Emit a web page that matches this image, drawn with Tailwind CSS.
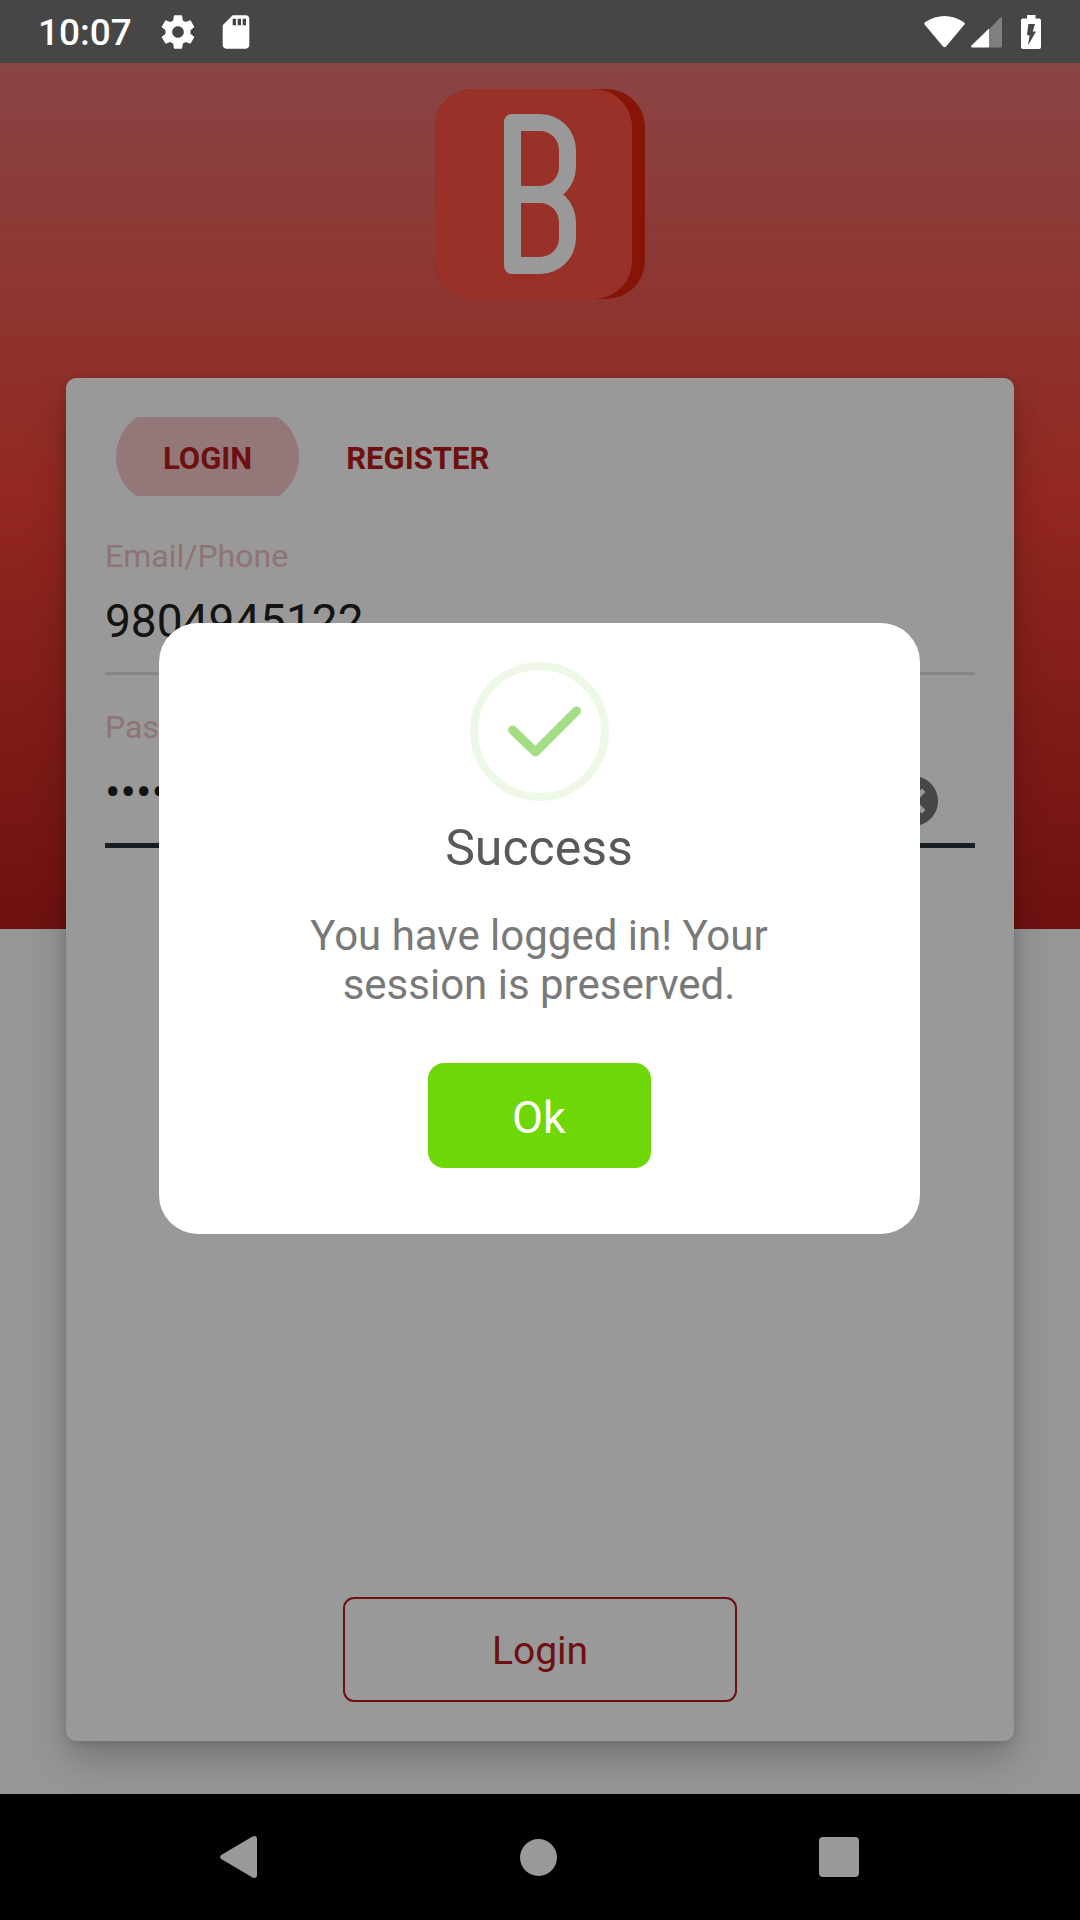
<!DOCTYPE html>
<html lang="en">
<head>
<meta charset="utf-8">
<meta name="viewport" content="width=device-width, initial-scale=1">
<title>Login</title>
<script src="https://cdn.jsdelivr.net/npm/@tailwindcss/browser@4"></script>
</head>
<body class="flex min-h-screen flex-col bg-[#fafafa] font-['Roboto',sans-serif]">

  <!-- Status bar -->
  <header class="flex h-[63px] items-center justify-between bg-[#464646] pr-7 pl-[38px] text-white">
    <div class="flex items-center">
      <span class="pt-0.5 text-[37px] leading-[44px] font-medium">10:07</span>
      <svg class="ml-[26px] size-10" viewBox="0 0 24 24" fill="currentColor" aria-hidden="true"><path d="M19.43 12.98c.04-.32.07-.64.07-.98s-.03-.66-.07-.98l2.11-1.65c.19-.15.24-.42.12-.64l-2-3.46c-.12-.22-.39-.3-.61-.22l-2.49 1c-.52-.4-1.08-.73-1.69-.98l-.38-2.65C14.46 2.18 14.25 2 14 2h-4c-.25 0-.46.18-.49.42l-.38 2.65c-.61.25-1.17.59-1.69.98l-2.49-1c-.23-.09-.49 0-.61.22l-2 3.46c-.13.22-.07.49.12.64l2.11 1.65c-.04.32-.07.65-.07.98s.03.66.07.98l-2.11 1.65c-.19.15-.24.42-.12.64l2 3.46c.12.22.39.3.61.22l2.49-1c.52.4 1.08.73 1.69.98l.38 2.65c.03.24.24.42.49.42h4c.25 0 .46-.18.49-.42l.38-2.65c.61-.25 1.17-.59 1.69-.98l2.49 1c.23.09.49 0 .61-.22l2-3.46c.12-.22.07-.49-.12-.64l-2.11-1.65zM12 15.5c-1.93 0-3.5-1.57-3.5-3.5s1.57-3.5 3.5-3.5 3.5 1.57 3.5 3.5-1.57 3.5-3.5 3.5z"/></svg>
      <svg class="ml-[18px] size-10" viewBox="0 0 24 24" fill="currentColor" aria-hidden="true"><path d="M18 2h-8L4.020 8 4 20c0 1.100.9 2 2 2h12c1.100 0 2-.9 2-2V4c0-1.100-.9-2-2-2zm-6 6h-2V4h2v4zm3 0h-2V4h2v4zm3 0h-2V4h2v4z"/></svg>
    </div>
    <div class="flex items-center">
      <svg class="h-8 w-[41px]" viewBox="0 0 41 32" fill="currentColor" aria-hidden="true"><path d="M1 9Q-.5 7.500 1 6.200Q20.500-6.200 40 6.200Q41.500 7.500 40 9L22 30.500Q20.500 32 19 30.500Z"/></svg>
      <svg class="ml-[6px] size-8" viewBox="0 0 32 32" aria-hidden="true"><path d="M18 13.500L29.300 1.500Q31 .5 31 2.500V29.500Q31 31.500 29 31.500H18Z" fill="#7f7f7f"/><path d="M18 12.500V31.500H1.500Q-.5 31 .5 29.500Z" fill="#fff"/></svg>
      <svg class="mr-[11px] ml-[18px] h-[34px] w-5" viewBox="0 0 20 34" aria-hidden="true"><path d="M6 0h8.500v3.500H18Q20 3.500 20 5.500V32Q20 34 18 34H2Q0 34 0 32V5.500Q0 3.500 2 3.500H6Z" fill="#fff"/><path d="M7.300 9H14L11.700 16.500H15L7 30.500L8.600 20.300H6Z" fill="#464646"/></svg>
    </div>
  </header>

  <main class="relative flex flex-1 flex-col">
    <div class="absolute inset-x-0 top-0 h-1/2 bg-linear-to-b/srgb from-[#e57373] via-[#f44336] to-[#b71c1c]"></div>

    <div class="relative flex flex-1 flex-col items-center px-[66px] pt-[26px] pb-[53px]">
      <!-- App logo: tile with a darker edge, mark built from two rounded frames -->
      <div class="size-[210px] rounded-[38px] bg-[#e0230d] pr-[13px]" role="img" aria-label="App logo">
        <div class="flex h-full flex-col items-start rounded-[38px] bg-[#ff5343] pt-[25px] pl-[69px]">
          <div class="h-[89px] w-[72px] rounded-l-lg rounded-r-[36px] rounded-bl-none border-[17px] border-white"></div>
          <div class="-mt-[17px] h-[88px] w-[72px] rounded-l-lg rounded-r-[36px] rounded-tl-none border-[17px] border-white"></div>
        </div>
      </div>

      <form class="mt-[79px] flex w-full flex-1 flex-col rounded-[10px] bg-white p-[39px] shadow-[0_18px_36px_rgba(0,0,0,0.22),0_2px_10px_rgba(0,0,0,0.12)]">
        <div class="ml-[11px] flex h-[79px] items-center overflow-hidden text-[31px] leading-[36px] font-bold text-[#b71c1c]">
          <button type="button" class="h-24 shrink-0 rounded-full bg-[#f7c7ca] px-[47px] pt-1">LOGIN</button>
          <button type="button" class="h-24 shrink-0 rounded-full px-[47px] pt-1">REGISTER</button>
        </div>

        <label for="email" class="mt-[41px] text-[32px] leading-[38px] text-[#eec1c1]">Email/Phone</label>
        <input id="email" type="text" value="9804945122" class="h-[100px] w-full border-b-[3px] border-[#e0e0e0] pb-[5px] text-[46px] text-[#212121] outline-none">

        <label for="password" class="mt-[33px] text-[32px] leading-[38px] text-[#eec1c1]">Password</label>
        <div class="relative">
          <input id="password" type="password" value="password" class="block h-[102px] w-full border-b-[5px] border-[#263238] pb-[5px] text-[46px] text-[#212121] outline-none">
          <button type="button" aria-label="Clear" class="absolute top-[25px] right-8 text-[#757575]">
            <svg class="size-[60px]" viewBox="0 0 24 24" fill="currentColor" aria-hidden="true"><path d="M12 2C6.470 2 2 6.470 2 12s4.470 10 10 10 10-4.470 10-10S17.530 2 12 2zm5 13.590L15.590 17 12 13.410 8.410 17 7 15.590 10.590 12 7 8.410 8.410 7 12 10.590 15.590 7 17 8.410 13.410 12 17 15.590z"/></svg>
          </button>
        </div>

        <button type="submit" class="mt-auto h-[105px] w-[394px] self-center rounded-[11px] border-2 border-[#b71c1c] pt-1 text-[39px] text-[#b71c1c]">Login</button>
      </form>
    </div>

    <!-- Success dialog -->
    <div class="absolute inset-0 flex items-center justify-center bg-black/40 pr-0.5">
      <div role="dialog" aria-modal="true" aria-labelledby="dialog-title" class="flex w-[761px] max-w-full flex-col items-center rounded-[39px] bg-white pt-[39px] pb-[66px] text-center">
        <svg class="size-[139px]" viewBox="0 0 139 139" fill="none" aria-hidden="true"><circle cx="69.500" cy="69.500" r="65.500" stroke="#edf8e7" stroke-width="8"/><path d="M42.500 68L65.500 90L106.500 49" stroke="#a5dc86" stroke-width="9" stroke-linecap="round" stroke-linejoin="round"/></svg>
        <h1 id="dialog-title" class="mt-[18px] text-[50px] leading-[59px] text-[#595959]">Success</h1>
        <p class="mt-[33px] w-[500px] text-[42px] leading-[49px] text-[#797979]">You have logged in! Your session is preserved.</p>
        <button type="button" class="mt-[54px] h-[105px] w-[223px] rounded-2xl bg-[#6dd708] pt-1 text-[45px] text-white">Ok</button>
      </div>
    </div>
  </main>

  <!-- System navigation -->
  <nav class="flex h-[126px] items-center justify-center bg-black pr-[3px] text-[#999]">
    <button type="button" aria-label="Back" class="flex w-[300px] justify-center">
      <svg class="h-[42px] w-[37px]" viewBox="0 0 37 42" fill="currentColor" aria-hidden="true"><path d="M1.200 23Q-1 21 1.200 19L32.500.5Q37-1 37 3V39Q37 43 32.500 41.500Z"/></svg>
    </button>
    <button type="button" aria-label="Home" class="flex w-[300px] justify-center">
      <span class="size-[37px] rounded-full bg-current"></span>
    </button>
    <button type="button" aria-label="Recent apps" class="flex w-[300px] justify-center">
      <span class="size-10 rounded bg-current"></span>
    </button>
  </nav>
</body>
</html>
